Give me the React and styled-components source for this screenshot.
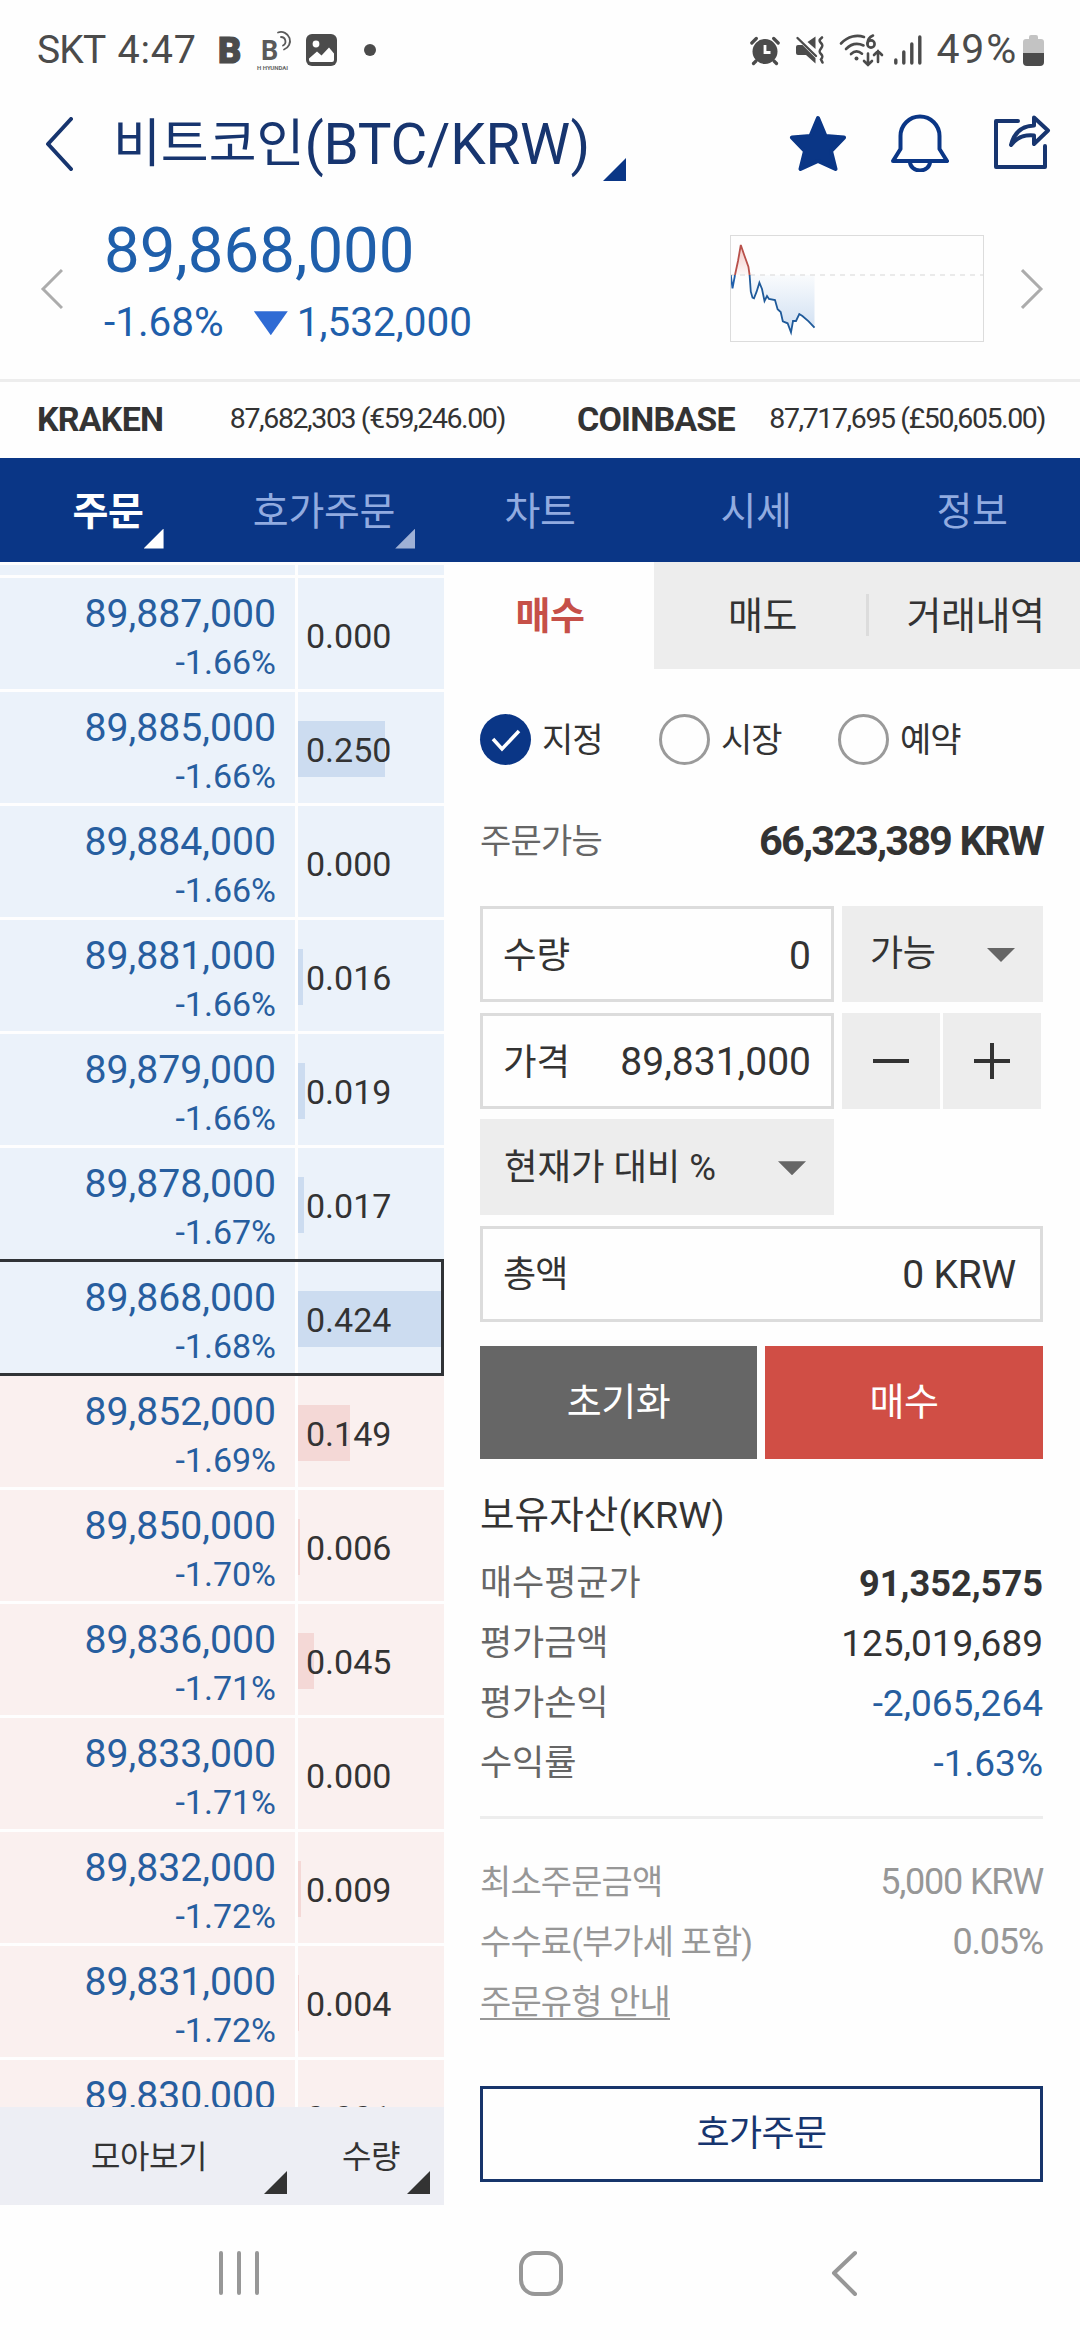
import React, { useState } from "react";
import styled, { createGlobalStyle } from "styled-components";

const GlobalStyle = createGlobalStyle`
  * {
    box-sizing: border-box;
  }
  body {
    margin: 0;
    background: #fefefe;
    font-family: Roboto, "Noto Sans CJK KR", sans-serif;
    color: #333;
  }
  button {
    font-family: inherit;
    line-height: 1.2;
    color: inherit;
    border: none;
    padding: 0;
    background: none;
    cursor: pointer;
  }
`;

const Screen = styled.div`
  display: flex;
  flex-direction: column;
  width: 1080px;
  height: 2340px;
  overflow: hidden;
  background: #fefefe;
`;

const Text = styled.span`
  font-size: ${({ size }) => size}px;
  font-weight: ${({ bold }) => bold ? 700 : 400};
  letter-spacing: ${({ spacing }) => spacing || 0}px;
  line-height: 1.2;
  white-space: nowrap;
  color: ${({ color }) => color || "inherit"};
`;

const Corner = styled.span`
  position: absolute;
  right: ${({ right }) => right}px;
  bottom: ${({ bottom }) => bottom}px;
  width: ${({ size }) => size}px;
  height: ${({ size }) => size}px;
  background: ${({ color }) => color};
  clip-path: polygon(100% 0, 100% 100%, 0 100%);
`;

/* status bar */

const StatusBar = styled.div`
  display: flex;
  align-items: center;
  justify-content: space-between;
  height: 100px;
  padding: 0 36px 0 37px;
  color: #4b4b4b;
`;

const StatusGroup = styled.div`
  display: flex;
  align-items: center;
`;

const StatusIcon = styled.svg`
  display: block;
  margin-left: ${({ gap }) => gap}px;
  overflow: visible;
`;

/* header */

const Header = styled.div`
  display: flex;
  align-items: center;
  height: 88px;
  padding: 0 29px 0 44px;
  color: #17356f;
`;

const BackButton = styled.button`
  display: flex;
  width: 69px;
`;

const Title = styled.div`
  position: relative;
  display: flex;
  align-items: center;
  width: 514px;
  height: 88px;
  padding-top: 3px;
`;

const HeaderActions = styled.div`
  display: flex;
  align-items: center;
  gap: 44px;
  margin-left: auto;
  padding-bottom: 2px;
  svg {
    display: block;
  }
`;

/* price summary */

const Summary = styled.div`
  display: flex;
  align-items: flex-start;
  height: 194px;
  padding: 23px 36px 0 40px;
  border-bottom: 3px solid #ededed;
  color: #1f5fab;
`;

const Arrow = styled.svg`
  display: block;
  margin-top: 58px;
`;

const PriceBlock = styled.div`
  display: flex;
  flex-direction: column;
  width: 668px;
  padding: 2px 0 0 41px;
`;

const ChangeRow = styled.div`
  display: flex;
  align-items: center;
  margin-top: 9px;
  height: 48px;
`;

const DownMark = styled.span`
  width: 34px;
  height: 24px;
  margin: 2px 9px 0 30px;
  background: #2f6bd4;
  clip-path: polygon(0 0, 100% 0, 50% 100%);
`;

const ChartBox = styled.div`
  width: 254px;
  height: 107px;
  margin: 24px 37px 0 0;
  border: 1px solid #dcdcdc;
  svg {
    display: block;
  }
`;

const Ticker = styled.div`
  display: grid;
  grid-template-columns: 1fr 1fr;
  height: 76px;
`;

const TickerItem = styled.div`
  display: flex;
  align-items: center;
  justify-content: space-between;
  padding: 0 35px 2px 37px;
`;

/* main tabs */

const Nav = styled.nav`
  display: grid;
  grid-template-columns: repeat(5, 1fr);
  height: 104px;
  background: #0a3686;
`;

const NavTab = styled.button`
  display: flex;
  align-items: center;
  justify-content: center;
  padding-top: 3px;
  color: ${({ active }) => active ? "#fff" : "#91abe0"};
`;

const NavLabel = styled.span`
  position: relative;
  font-size: 39px;
  font-weight: ${({ active }) => active ? 700 : 400};
  line-height: 50px;
  letter-spacing: -0.3px;
`;

const Body = styled.div`
  display: flex;
  height: 1643px;
`;

/* order book */

const Book = styled.div`
  display: flex;
  flex-direction: column;
  width: 444px;
  padding-top: 3px;
`;

const BookList = styled.div`
  display: flex;
  flex-direction: column;
  gap: 3px;
  height: 1542px;
  overflow: hidden;
`;

const BookRow = styled.div`
  position: relative;
  display: grid;
  grid-template-columns: 295px 146px;
  column-gap: 3px;
  flex: none;
  height: ${({ sliver }) => sliver ? 10 : 111}px;
`;

const cellColor = { ask: "#ebf2fa", bid: "#faf0ef" };
const barColor = { ask: "#ccdcf0", bid: "#f4d8d6" };

const PriceCell = styled.div`
  display: flex;
  flex-direction: column;
  align-items: flex-end;
  gap: 4px;
  padding: 13px 19px 0 0;
  background: ${({ side }) => cellColor[side]};
  color: #275e9f;
`;

const SliverCell = styled.div`
  background: ${cellColor.ask};
`;

const AmountCell = styled.div`
  position: relative;
  display: flex;
  align-items: center;
  padding: 4px 0 0 8px;
  background: ${({ side }) => cellColor[side]};
`;

const AmountBar = styled.span`
  position: absolute;
  left: 0;
  top: 29px;
  height: 56px;
  background: ${({ side }) => barColor[side]};
`;

const AmountText = styled.span`
  position: relative;
  font-size: 34px;
  line-height: 40px;
`;

const CurrentFrame = styled.div`
  position: absolute;
  inset: -3px 0 -3px 0;
  border: 3px solid #303336;
  border-left: none;
`;

const BookFooter = styled.div`
  display: grid;
  grid-template-columns: 298px 146px;
  height: 98px;
  background: #edeef4;
`;

const FooterButton = styled.button`
  position: relative;
  padding-top: 2px;
  font-size: 32px;
  letter-spacing: -0.4px;
`;

/* order form */

const Panel = styled.div`
  display: flex;
  flex-direction: column;
  flex: 1;
`;

const SideTabs = styled.div`
  display: grid;
  grid-template-columns: 210px 215px 211px;
  height: 107px;
`;

const SideTab = styled.button`
  position: relative;
  padding: 2px 0 0 2px;
  background: ${({ active }) => active ? "#fefefe" : "#ededed"};
  color: ${({ active }) => active ? "#c65048" : "#333"};
  font-size: 38px;
  font-weight: ${({ active }) => active ? 700 : 400};
  letter-spacing: -0.5px;
  &:nth-child(2)::after {
    content: "";
    position: absolute;
    right: 0;
    top: 32px;
    width: 3px;
    height: 42px;
    background: #dcdcdc;
  }
`;

const Form = styled.div`
  display: flex;
  flex-direction: column;
  padding: 45px 37px 0 36px;
`;

const Radios = styled.div`
  display: grid;
  grid-template-columns: 179px 179px 1fr;
  height: 51px;
`;

const Radio = styled.label`
  display: flex;
  align-items: center;
  gap: 11px;
  ${Text} {
    padding-top: 2px;
  }
`;

const RadioMark = styled.span`
  display: flex;
  align-items: center;
  justify-content: center;
  width: 51px;
  height: 51px;
  border-radius: 50%;
  border: ${({ checked }) => checked ? "none" : "3px solid #9a9a9a"};
  background: ${({ checked }) => checked ? "#0a3686" : "#fefefe"};
`;

const Line = styled.div`
  display: flex;
  align-items: center;
  justify-content: space-between;
  height: 60px;
`;

const Available = styled(Line)`
  margin: 46px 0 35px;
`;

const Fields = styled.div`
  display: grid;
  grid-template-columns: 354px 201px;
  column-gap: 8px;
  row-gap: 10.6px;
`;

const Field = styled.div`
  display: flex;
  align-items: center;
  justify-content: space-between;
  grid-column: ${({ wide }) => wide ? "1 / 3" : "auto"};
  height: 96px;
  padding: 4px ${({ wide }) => wide ? 24 : 20}px 0 20px;
  border: 3px solid #dcdcdc;
`;

const Select = styled.button`
  display: flex;
  align-items: center;
  justify-content: space-between;
  height: 96px;
  padding: 2px 28px 0 ${({ inset }) => inset}px;
  background: #ededed;
`;

const Caret = styled.span`
  width: 28px;
  height: 14px;
  background: #666;
  clip-path: polygon(0 0, 100% 0, 50% 100%);
`;

const Stepper = styled.div`
  display: grid;
  grid-template-columns: 98px 98px;
  gap: 3px;
`;

const StepButton = styled.button`
  display: flex;
  align-items: center;
  justify-content: center;
  background: #ededed;
`;

const Actions = styled.div`
  display: grid;
  grid-template-columns: 277px 278px;
  gap: 8px;
  margin-top: 24px;
`;

const ActionButton = styled.button`
  height: 113px;
  padding-top: 2px;
  background: ${({ buy }) => buy ? "#d04e45" : "#666"};
  color: #fff;
  font-size: 38px;
  letter-spacing: -0.5px;
`;

const Holdings = styled.div`
  margin-top: 27px;
  padding-bottom: 22px;
  border-bottom: 3px solid #ededed;
`;

const HoldingsTitle = styled(Line)`
  margin-bottom: 8px;
`;

const Notes = styled.div`
  padding-top: 34px;
  color: #979797;
`;

const GuideLink = styled.a`
  font-size: 34px;
  letter-spacing: -0.9px;
  line-height: 32px;
  border-bottom: 2px solid #979797;
`;

const OutlineButton = styled.button`
  height: 96px;
  margin-top: 53px;
  padding-top: 2px;
  border: 3px solid #17356b;
  color: #17356f;
  font-size: 36px;
  letter-spacing: -0.6px;
`;

/* system navigation */

const SystemNav = styled.div`
  display: flex;
  align-items: center;
  height: 135px;
  padding-left: 218px;
`;

const book = [
  { side: "ask", price: "89,887,000", rate: "-1.66%", amount: "0.000", bar: 0 },
  { side: "ask", price: "89,885,000", rate: "-1.66%", amount: "0.250", bar: 87 },
  { side: "ask", price: "89,884,000", rate: "-1.66%", amount: "0.000", bar: 0 },
  { side: "ask", price: "89,881,000", rate: "-1.66%", amount: "0.016", bar: 5 },
  { side: "ask", price: "89,879,000", rate: "-1.66%", amount: "0.019", bar: 7 },
  { side: "ask", price: "89,878,000", rate: "-1.67%", amount: "0.017", bar: 6 },
  { side: "ask", price: "89,868,000", rate: "-1.68%", amount: "0.424", bar: 146, current: true },
  { side: "bid", price: "89,852,000", rate: "-1.69%", amount: "0.149", bar: 52 },
  { side: "bid", price: "89,850,000", rate: "-1.70%", amount: "0.006", bar: 2 },
  { side: "bid", price: "89,836,000", rate: "-1.71%", amount: "0.045", bar: 16 },
  { side: "bid", price: "89,833,000", rate: "-1.71%", amount: "0.000", bar: 0 },
  { side: "bid", price: "89,832,000", rate: "-1.72%", amount: "0.009", bar: 3 },
  { side: "bid", price: "89,831,000", rate: "-1.72%", amount: "0.004", bar: 1 },
  { side: "bid", price: "89,830,000", amount: "0.001", bar: 0 },
];

const navTabs = ["주문", "호가주문", "차트", "시세", "정보"];
const sideTabs = ["매수", "매도", "거래내역"];
const orderTypes = ["지정", "시장", "예약"];

const holdings = [
  { label: "매수평균가", value: "91,352,575", size: 36.2, bold: true },
  { label: "평가금액", value: "125,019,689", size: 37 },
  { label: "평가손익", value: "-2,065,264", size: 37, color: "#275e9f" },
  { label: "수익률", value: "-1.63%", size: 37, color: "#275e9f" },
];

function Status() {
  return (
    <StatusBar>
      <StatusGroup>
        <Text size={39} spacing={-0.8}>SKT</Text>
        <StatusIcon as="span" gap={12}><Text size={39.5} spacing={0.8}>4:47</Text></StatusIcon>
        <StatusIcon gap={20} width="28" height="44" viewBox="0 0 28 44">
          <text x="1" y="35" fontSize="36" fontWeight="900" fontFamily="Roboto" fill="#4b4b4b" stroke="#4b4b4b" strokeWidth="1.2">B</text>
        </StatusIcon>
        <StatusIcon gap={12} width="38" height="42" viewBox="0 0 38 42">
          <text x="4" y="31" fontSize="27" fontWeight="700" fontFamily="Roboto" fill="#5a5a5a">B</text>
          <text x="0" y="40.5" fontSize="6" fontWeight="700" fontFamily="Roboto" fill="#666">H HYUNDAI</text>
          <g fill="none" stroke="#5a5a5a" strokeWidth="1.8" strokeLinecap="round">
            <path d="M24 8a4.500 4.500 0 0 1 2 8.500" />
            <path d="M21 3.500a9 9 0 1 1 6 17" />
          </g>
        </StatusIcon>
        <StatusIcon gap={11} width="31" height="32" viewBox="0 0 31 32">
          <rect width="31" height="32" rx="6" fill="#4b4b4b" />
          <circle cx="10" cy="10" r="3.400" fill="#fefefe" />
          <path d="M3 24.500l8-7 4.500 4 7.500-8 5 6v6.500a2 2 0 0 1-2 2H5a2 2 0 0 1-2-2z" fill="#fefefe" />
        </StatusIcon>
        <StatusIcon gap={27} width="12" height="12" viewBox="0 0 12 12">
          <circle cx="6" cy="6" r="6" fill="#4b4b4b" />
        </StatusIcon>
      </StatusGroup>
      <StatusGroup>
        <StatusIcon width="30" height="29" viewBox="0 0 30 29">
          <circle cx="15" cy="15.500" r="12.500" fill="#4b4b4b" />
          <path d="M1.800 7l4.500-4.500M28.200 7l-4.500-4.500M6 25l-2.500 2.500M24 25l2.500 2.500" stroke="#4b4b4b" strokeWidth="3.200" strokeLinecap="round" />
          <path d="M15 9v7.500h5.500" fill="none" stroke="#fefefe" strokeWidth="2.800" />
        </StatusIcon>
        <StatusIcon gap={15} width="30" height="30" viewBox="0 0 30 30">
          <path d="M20.500 1.500v12.500L12.500 7zM3 10h4.500l13 13v5.500L11 20H3a2 2 0 0 1-2-2v-6a2 2 0 0 1 2-2z" fill="#4b4b4b" />
          <path d="M2.500 3l18.500 18" stroke="#4b4b4b" strokeWidth="2.400" strokeLinecap="round" />
          <path d="M27 2.500c-3 2.500-3 3.500-1 5.500s2 3 0 5.500-2 3.500 0 5.500 2 3 0 5.500l1.500 3" fill="none" stroke="#4b4b4b" strokeWidth="2.600" strokeLinecap="round" />
        </StatusIcon>
        <StatusIcon gap={14} width="46" height="34" viewBox="0 0 46 34">
          <g fill="none" stroke="#4b4b4b" strokeWidth="2.600" strokeLinecap="round">
            <path d="M2 10.500C9 3 18 1.500 25 4" />
            <path d="M7 16c5.500-5.500 11-6.500 17.500-3.500" />
            <path d="M12 21c3.500-3.200 7.500-3.200 11-.3" />
            <path d="M34 2.500c-3.500 1.500-5.500 4.500-5.500 8" />
            <circle cx="32" cy="11" r="3.600" />
            <path d="M29 20.500v11.500M25 28l4 4 4-4M39 29V18M35 22l4-4 4 4" />
          </g>
          <circle cx="17.500" cy="25.500" r="2" fill="#4b4b4b" />
        </StatusIcon>
        <StatusIcon gap={9} width="28" height="30" viewBox="0 0 28 30">
          <path d="M1.800 28v-3M9.800 28V17M17.800 28V9M25.800 28V2" stroke="#4b4b4b" strokeWidth="3.400" strokeLinecap="round" />
        </StatusIcon>
        <StatusIcon as="span" gap={14}><Text size={41} spacing={1.8}>49%</Text></StatusIcon>
        <StatusIcon gap={5} width="21" height="32" viewBox="0 0 21 32">
          <path d="M6 3a2 2 0 0 1 2-2h5a2 2 0 0 1 2 2v2h3a3 3 0 0 1 3 3v12H0V8a3 3 0 0 1 3-3h3z" fill="#c3c3c3" />
          <path d="M0 19h21v9a4 4 0 0 1-4 4H4a4 4 0 0 1-4-4z" fill="#4b4b4b" />
        </StatusIcon>
      </StatusGroup>
    </StatusBar>
  );
}

function PriceChart() {
  const tail = "L20.800 56.700 22.500 62.700 24 63.300 26.600 56.700 29.400 47.700 32 54 34.500 66 37 61 39 64 45 65 47.600 74.300 50.700 77 52.800 86.300 57.600 88.300 61 97.300 63 86 66 86 69.300 79 72.400 81 78.600 86.300 84.500 92.700";
  return (
    <svg width="252" height="105" viewBox="1 1 252 105" fill="none">
      <defs>
        <linearGradient id="fall" x1="0" y1="40" x2="0" y2="97" gradientUnits="userSpaceOnUse">
          <stop offset="0" stopColor="#cfdff2" stopOpacity="0.1" />
          <stop offset="1" stopColor="#cfdff2" />
        </linearGradient>
        <linearGradient id="rise" x1="0" y1="10" x2="0" y2="40" gradientUnits="userSpaceOnUse">
          <stop offset="0" stopColor="#f3c6c2" />
          <stop offset="1" stopColor="#f3c6c2" stopOpacity="0.1" />
        </linearGradient>
      </defs>
      <path d={"M19.600 40" + tail + "V40z"} fill="url(#fall)" />
      <path d="M5 40l3-14 2.800-16 3.400 10 4.200 11.700 1.200 8.300z" fill="url(#rise)" />
      <path d="M0 40h254" stroke="#e4e4e4" strokeWidth="1.500" strokeDasharray="5 5" />
      <path d="M.8 40l1.700 13.300 2.500-13.300" stroke="#1f5fab" strokeWidth="1.800" />
      <path d="M5 40l3-14 2.800-16 3.400 10 4.200 11.700 1.200 8.300" stroke="#b8504a" strokeWidth="1.800" />
      <path d={"M19.600 40" + tail} stroke="#1f5a9a" strokeWidth="1.800" />
    </svg>
  );
}

function OrderBook() {
  return (
    <Book>
      <BookList>
        <BookRow sliver>
          <SliverCell />
          <SliverCell />
        </BookRow>
        {book.map((row) => (
          <BookRow key={row.price}>
            <PriceCell side={row.side}>
              <Text size={39.2}>{row.price}</Text>
              {row.rate && <Text size={34}>{row.rate}</Text>}
            </PriceCell>
            <AmountCell side={row.side}>
              <AmountBar side={row.side} style={{ width: row.bar }} />
              <AmountText>{row.amount}</AmountText>
            </AmountCell>
            {row.current && <CurrentFrame />}
          </BookRow>
        ))}
      </BookList>
      <BookFooter>
        <FooterButton>
          모아보기
          <Corner size={23} right={11} bottom={11} color="#333" />
        </FooterButton>
        <FooterButton>
          수량
          <Corner size={23} right={14} bottom={11} color="#333" />
        </FooterButton>
      </BookFooter>
    </Book>
  );
}

function OrderForm() {
  const [side, setSide] = useState("매수");
  const [type, setType] = useState("지정");

  return (
    <Panel>
      <SideTabs>
        {sideTabs.map((tab) => (
          <SideTab key={tab} active={tab === side} onClick={() => setSide(tab)}>{tab}</SideTab>
        ))}
      </SideTabs>
      <Form>
        <Radios>
          {orderTypes.map((item) => (
            <Radio key={item} onClick={() => setType(item)}>
              <RadioMark checked={item === type}>
                {item === type && (
                  <svg width="30" height="24" viewBox="0 0 30 24" fill="none" stroke="#fff" strokeWidth="3.500">
                    <path d="M2 11l9 10L28 3" />
                  </svg>
                )}
              </RadioMark>
              <Text size={34} spacing={-1}>{item}</Text>
            </Radio>
          ))}
        </Radios>
        <Available>
          <Text size={34} spacing={-0.8} color="#666">주문가능</Text>
          <Text size={41.5} spacing={-1.9} bold>66,323,389 KRW</Text>
        </Available>
        <Fields>
          <Field>
            <Text size={36.5}>수량</Text>
            <Text size={39}>0</Text>
          </Field>
          <Select inset={28}>
            <Text size={36} spacing={-0.3}>가능</Text>
            <Caret />
          </Select>
          <Field>
            <Text size={36.5}>가격</Text>
            <Text size={39}>89,831,000</Text>
          </Field>
          <Stepper>
            <StepButton>
              <svg width="36" height="36" viewBox="0 0 36 36"><path d="M0 18h36" stroke="#333" strokeWidth="4" /></svg>
            </StepButton>
            <StepButton>
              <svg width="36" height="36" viewBox="0 0 36 36"><path d="M0 18h36M18 0v36" stroke="#333" strokeWidth="4" /></svg>
            </StepButton>
          </Stepper>
          <Select inset={24}>
            <Text size={36.5} spacing={-0.1}>현재가 대비 %</Text>
            <Caret />
          </Select>
          <Field wide>
            <Text size={36} spacing={-0.8}>총액</Text>
            <Text size={39} spacing={-0.2}>0 KRW</Text>
          </Field>
        </Fields>
        <Actions>
          <ActionButton>초기화</ActionButton>
          <ActionButton buy>매수</ActionButton>
        </Actions>
        <Holdings>
          <HoldingsTitle>
            <Text size={37.5} spacing={0.1}>보유자산(KRW)</Text>
          </HoldingsTitle>
          {holdings.map((item) => (
            <Line key={item.label}>
              <Text size={35} spacing={-0.1} color="#666">{item.label}</Text>
              <Text size={item.size} bold={item.bold} color={item.color}>{item.value}</Text>
            </Line>
          ))}
        </Holdings>
        <Notes>
          <Line>
            <Text size={34} spacing={-0.9}>최소주문금액</Text>
            <Text size={36} spacing={-1.2}>5,000 KRW</Text>
          </Line>
          <Line>
            <Text size={34} spacing={-0.9}>수수료(부가세 포함)</Text>
            <Text size={36} spacing={-1.2}>0.05%</Text>
          </Line>
          <Line>
            <GuideLink>주문유형 안내</GuideLink>
          </Line>
        </Notes>
        <OutlineButton>호가주문</OutlineButton>
      </Form>
    </Panel>
  );
}

function App() {
  const [tab, setTab] = useState("주문");

  return (
    <Screen>
      <GlobalStyle />
      <Status />
      <Header>
        <BackButton>
          <svg width="30" height="54" viewBox="0 0 30 54" fill="none" stroke="#17356f" strokeWidth="4" strokeLinecap="round" strokeLinejoin="round">
            <path d="M27 2L4 27l23 25" />
          </svg>
        </BackButton>
        <Title>
          <Text size={52}>비트코인</Text>
          <Text size={56.5} spacing={-0.2}>(BTC/KRW)</Text>
          <Corner size={23} right={1} bottom={7} color="#0a3686" />
        </Title>
        <HeaderActions>
          <svg width="58" height="56" viewBox="0 0 58 56">
            <path d="M29 3l7.500 18 18.500 1.500-13 13.500 4.500 18L29 46l-17.500 8 4.500-18L3 22.500 21.500 21z" fill="#0a3686" stroke="#0a3686" strokeWidth="4" strokeLinejoin="round" />
          </svg>
          <svg width="58" height="58" viewBox="0 0 58 58" fill="none" stroke="#0a3686" strokeWidth="4" strokeLinejoin="round">
            <path d="M9.500 35V22a19.500 19.500 0 0 1 39 0v13L56 47H2z" />
            <path d="M19 48a10 8.500 0 0 0 20 0" />
          </svg>
          <svg width="58" height="56" viewBox="0 0 58 56" fill="none" stroke="#17356f" strokeWidth="4" strokeLinecap="round" strokeLinejoin="round">
            <path d="M25 6H3v46h49V31" />
            <path d="M18 30C21 18 29 11 41 10.500V2.500L55 15.500 41 29v-8.500C31 19.500 24 22 18 30z" />
          </svg>
        </HeaderActions>
      </Header>
      <Summary>
        <Arrow width="23" height="40" viewBox="0 0 23 40" fill="none" stroke="#acacac" strokeWidth="3">
          <path d="M22 1L3 20l19 19" />
        </Arrow>
        <PriceBlock>
          <Text size={63.5}>89,868,000</Text>
          <ChangeRow>
            <Text size={40.5}>-1.68%</Text>
            <DownMark />
            <Text size={40.5}>1,532,000</Text>
          </ChangeRow>
        </PriceBlock>
        <ChartBox><PriceChart /></ChartBox>
        <Arrow width="23" height="40" viewBox="0 0 23 40" fill="none" stroke="#acacac" strokeWidth="3">
          <path d="M1 1l19 19L1 39" />
        </Arrow>
      </Summary>
      <Ticker>
        <TickerItem>
          <Text size={34} spacing={-0.8} bold>KRAKEN</Text>
          <Text size={28.5} spacing={-1.4}>87,682,303 (€59,246.00)</Text>
        </TickerItem>
        <TickerItem>
          <Text size={34} spacing={-0.8} bold>COINBASE</Text>
          <Text size={28.5} spacing={-1.4}>87,717,695 (£50,605.00)</Text>
        </TickerItem>
      </Ticker>
      <Nav>
        {navTabs.map((name, index) => (
          <NavTab key={name} active={name === tab} onClick={() => setTab(name)}>
            <NavLabel active={name === tab}>
              {name}
              {index < 2 && <Corner size={20} right={-20} bottom={-12} color={name === tab ? "#fff" : "#9fb1d6"} />}
            </NavLabel>
          </NavTab>
        ))}
      </Nav>
      <Body>
        <OrderBook />
        <OrderForm />
      </Body>
      <SystemNav>
        <svg width="640" height="46" viewBox="0 0 640 46" fill="none" stroke="#979797" strokeWidth="4" strokeLinecap="round">
          <path d="M3 3v40M21 3v40M39 3v40" />
          <rect x="303" y="3" width="40" height="41" rx="14" />
          <path d="M637 3L616 23l21 21" strokeLinejoin="round" />
        </svg>
      </SystemNav>
    </Screen>
  );
}

export default App;
